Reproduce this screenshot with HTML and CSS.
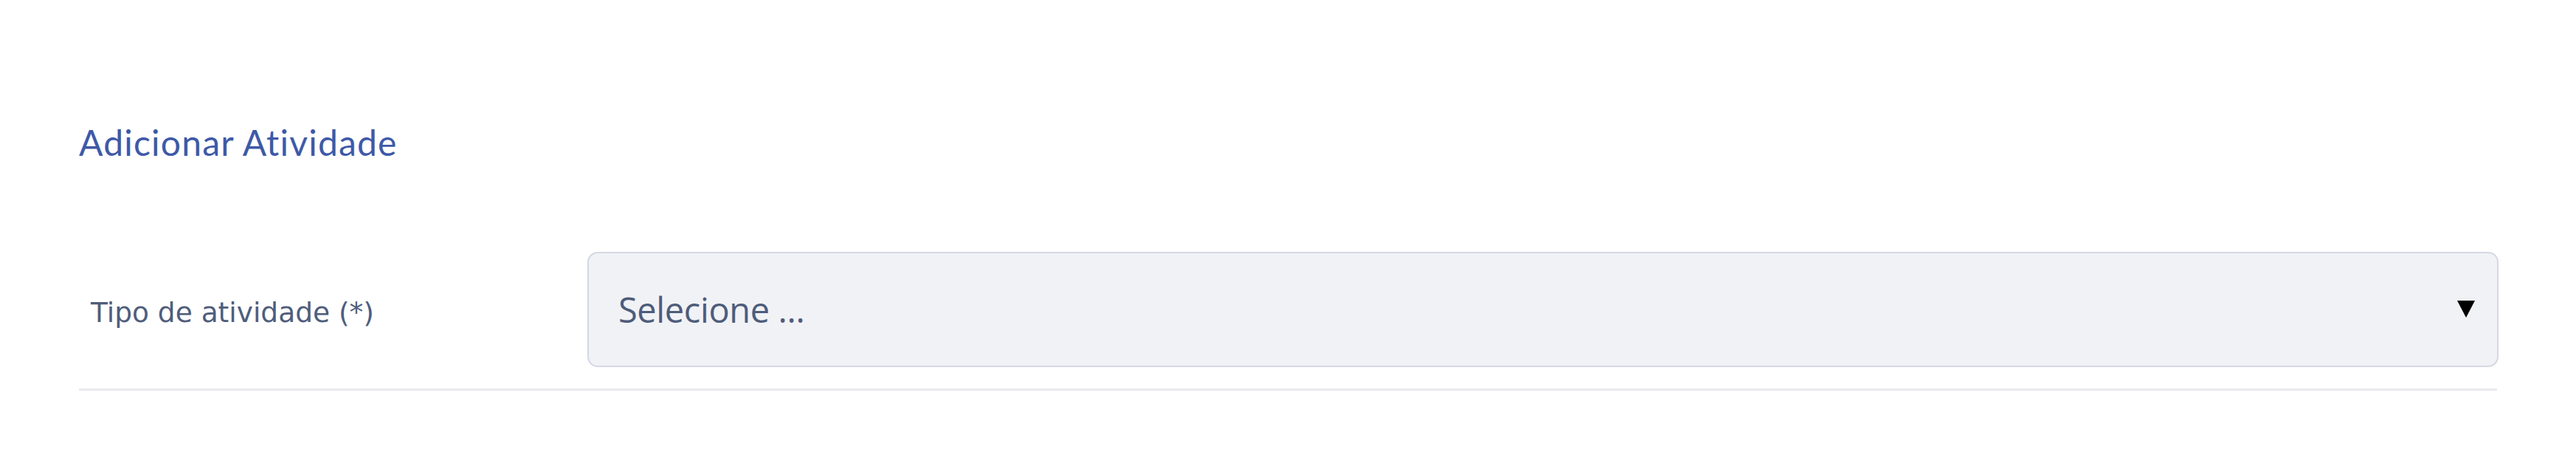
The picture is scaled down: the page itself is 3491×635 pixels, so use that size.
FILE: index.html
```html
<!DOCTYPE html>
<html lang="pt-BR">
<head>
    <meta charset="UTF-8">
    <meta name="viewport" content="width=device-width, initial-scale=1.0">
    <title>Adicionar Atividade</title>
    <link rel="stylesheet" href="styles.css">
</head>
<body>
    <div class="page">
        <h2 class="page-title">Adicionar Atividade</h2>

        <div class="form-row">
            <label class="form-label" for="tipoAtividade">Tipo de atividade (*)</label>
            <div class="select-box" id="tipoAtividade" role="combobox" aria-expanded="false">
                <span class="select-text">Selecione ...</span>
                <svg class="select-arrow" width="24" height="23" viewBox="0 0 24 23">
                    <polygon points="0,0 24,0 12,23" fill="#000"/>
                </svg>
            </div>
        </div>
    </div>
</body>
</html>
```

FILE: styles.css
```css
body { margin: 0; background-color: #ffffff; font-family: Lato, "Open Sans", sans-serif; font-variant-ligatures: none; }
.page { padding: 164px 105px 0 107px; }
.page-title { margin: 0; font-family: Lato, sans-serif; font-weight: 400; font-size: 48px; line-height: 1.2; letter-spacing: 1.2px; color: #3e59a7; }

.form-row { display: grid; grid-template-columns: 689px 1fr; align-items: center; margin-top: 119px; padding-bottom: 29px; border-bottom: 3px solid #e9e9ef; margin-right: 2px; }
.form-label { padding: 10px 0 0 16px; font-family: "DejaVu Sans", sans-serif; font-size: 37.5px; line-height: 1.2; color: #4f5d7b; }

.select-box { display: flex; justify-content: space-between; align-items: center; box-sizing: border-box; height: 156px; margin-right: -2px; padding: 0 30px 0 40px; background-color: #f1f2f6; border: 2px solid #d5d8e4; border-radius: 14px; }
.select-text { font-family: "Open Sans", sans-serif; font-size: 47px; letter-spacing: -0.4px; color: #4e5c7a; }
.select-arrow { display: block; }
```
